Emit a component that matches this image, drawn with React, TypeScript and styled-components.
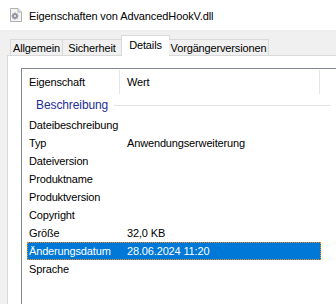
import React from "react";
import styled, { createGlobalStyle } from "styled-components";

const Global = createGlobalStyle`
  html, body { margin: 0; padding: 0; }
  body {
    background: #f0f0f0;
    font-family: "Liberation Sans", Arial, sans-serif;
    font-size: 11px;
    letter-spacing: -0.15px;
    color: #000;
    overflow: hidden;
    width: 336px;
    height: 304px;
  }
`;

const Window = styled.div`
  width: 336px;
  height: 304px;
  overflow: hidden;
  display: flex;
  flex-direction: column;
`;

const TitleBar = styled.div`
  height: 30px;
  flex: none;
  background: #fff;
  display: flex;
  align-items: center;
  padding-left: 10px;
  gap: 7px;
  font-size: 11px;
  letter-spacing: -0.1px;
  box-sizing: border-box;
`;

const TitleText = styled.span`
  margin-top: 1px;
`;

const Body = styled.div`
  flex: 1;
  display: flex;
  flex-direction: column;
  padding: 5px 0 0 7px;
`;

const TabStrip = styled.div`
  display: flex;
  align-items: flex-end;
  padding-left: 3px;
  height: 21px;
  position: relative;
  z-index: 1;
`;

const Tab = styled.div<{ $active?: boolean; $w: number }>`
  box-sizing: border-box;
  width: ${(p) => p.$w}px;
  height: ${(p) => (p.$active ? 21 : 17)}px;
  margin: 0 ${(p) => (p.$active ? -1 : 0)}px;
  border: 1px solid #d9d9d9;
  border-bottom: ${(p) => (p.$active ? "none" : "1px solid #d9d9d9")};
  border-left-width: ${(p) => (p.$active ? 1 : 0)}px;
  background: ${(p) => (p.$active ? "#fff" : "#f0f0f0")};
  display: flex;
  justify-content: center;
  align-items: ${(p) => (p.$active ? "flex-start" : "center")};
  padding-top: ${(p) => (p.$active ? 3 : 0)}px;
  white-space: nowrap;
  &:first-child { border-left-width: 1px; }
`;

const Panel = styled.div`
  flex: 1;
  width: 340px;
  background: #fff;
  border-left: 1px solid #d9d9d9;
  border-top: 1px solid #d9d9d9;
  margin-top: -1px;
  padding: 12px 0 0 13px;
  box-sizing: border-box;
`;

const ListBox = styled.div`
  width: 320px;
  height: 260px;
  border-left: 1px solid #828790;
  border-top: 1px solid #828790;
  background: #fff;
  box-sizing: border-box;
`;

const Header = styled.div`
  height: 25px;
  display: flex;
  align-items: stretch;
`;

const HeaderCell = styled.div<{ $w: number }>`
  width: ${(p) => p.$w}px;
  box-sizing: border-box;
  padding: 0 0 1px 7px;
  display: flex;
  align-items: center;
  border-right: 1px solid #e5e5e5;
  margin: 1px 0 0;
`;

const GroupHeader = styled.div`
  height: 22px;
  display: flex;
  align-items: center;
  padding-left: 14px;
  gap: 6px;
  color: #1f2d96;
  font-size: 12px;
  letter-spacing: -0.1px;
`;

const GroupLine = styled.div`
  width: 216px;
  height: 1px;
  background: #e2e2e2;
  margin-top: 1px;
`;

const Row = styled.div<{ $selected?: boolean }>`
  height: 18px;
  width: 294px;
  margin-left: 5px;
  box-sizing: border-box;
  display: flex;
  align-items: center;
  border: 1px ${(p) => (p.$selected ? "dotted #f88e1e" : "solid transparent")};
  background: ${(p) => (p.$selected ? "#0078d7" : "transparent")};
  color: ${(p) => (p.$selected ? "#fff" : "#000")};
`;

const Cell = styled.div<{ $w: number }>`
  width: ${(p) => p.$w}px;
  padding-left: 1px;
  white-space: nowrap;
`;

const FileIcon = () => (
  <svg width="12" height="14" viewBox="0 0 12 14">
    <path d="M0.5 0.5h7.5l3.5 3.5v9.5h-11z" fill="#f4f4f4" stroke="#b0b0b0" />
    <path d="M8 0.5v3.5h3.5" fill="#e6e6e6" stroke="#b0b0b0" />
    <g transform="translate(5 8)">
      {[0, 45, 90, 135].map((a) => (
        <rect key={a} x="-0.7" y="-3.5" width="1.4" height="7" fill="#8d929b" transform={`rotate(${a})`} />
      ))}
      <circle r="2.5" fill="#8d929b" />
      <circle r="1" fill="#f4f4f4" />
    </g>
  </svg>
);

const rows: [string, string][] = [
  ["Dateibeschreibung", ""],
  ["Typ", "Anwendungserweiterung"],
  ["Dateiversion", ""],
  ["Produktname", ""],
  ["Produktversion", ""],
  ["Copyright", ""],
  ["Größe", "32,0 KB"],
  ["Änderungsdatum", "28.06.2024 11:20"],
  ["Sprache", ""],
];

const tabs: [string, number][] = [
  ["Allgemein", 53],
  ["Sicherheit", 59],
  ["Details", 49],
  ["Vorgängerversionen", 100],
];

export default function App() {
  return (
    <Window>
      <Global />
      <TitleBar>
        <FileIcon />
        <TitleText>Eigenschaften von AdvancedHookV.dll</TitleText>
      </TitleBar>
      <Body>
        <TabStrip>
          {tabs.map(([t, w]) => (
            <Tab key={t} $w={w} $active={t === "Details"}>
              {t}
            </Tab>
          ))}
        </TabStrip>
        <Panel>
          <ListBox>
            <Header>
              <HeaderCell $w={98}>Eigenschaft</HeaderCell>
              <HeaderCell $w={200}>Wert</HeaderCell>
            </Header>
            <GroupHeader>
              Beschreibung
              <GroupLine />
            </GroupHeader>
            {rows.map(([k, v]) => (
              <Row key={k} $selected={k === "Änderungsdatum"}>
                <Cell $w={97}>{k}</Cell>
                <Cell $w={190}>{v}</Cell>
              </Row>
            ))}
          </ListBox>
        </Panel>
      </Body>
    </Window>
  );
}
